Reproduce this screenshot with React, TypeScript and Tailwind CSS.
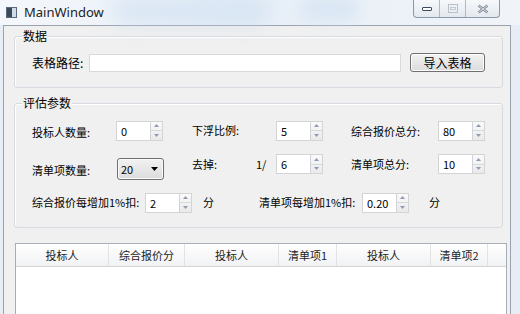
import React from "react";

const cjk = { fontFamily: '"Microsoft YaHei","Noto Sans CJK SC","Noto Sans",sans-serif' };

function Spin({ value, w = 47 }: { value: string; w?: number }) {
  return (
    <div className="flex h-[20px] shrink-0 border border-[#d4d4d4] bg-white" style={{ width: w }}>
      <div className="flex-1 pl-[4px] text-[11px] leading-[18px] text-black">{value}</div>
      <div className="flex w-[12px] flex-col border-l border-[#d0d4da] bg-gradient-to-b from-[#fafafa] to-[#eaeaea]">
        <div className="flex flex-1 items-center justify-center border-b border-[#d6d9de]">
          <svg width="5" height="3" viewBox="0 0 5 3"><path d="M2.5 0L5 3H0z" fill="#8f9bae" /></svg>
        </div>
        <div className="flex flex-1 items-center justify-center">
          <svg width="5" height="3" viewBox="0 0 5 3"><path d="M0 0H5L2.5 3z" fill="#8f9bae" /></svg>
        </div>
      </div>
    </div>
  );
}

function Group({ title, className, children }: { title: string; className: string; children: React.ReactNode }) {
  return (
    <div className={"relative border border-[#d5dbe0] rounded-[3px] shadow-[inset_1px_1px_0_#ffffff] " + className}>
      <span className="absolute left-[7px] top-[-9px] whitespace-nowrap bg-[#f0f0f0] px-[1px] text-[12px] leading-[16px] text-black">{title}</span>
      {children}
    </div>
  );
}

export default function App() {
  const headers = [
    { t: "投标人", w: 93 },
    { t: "综合报价分", w: 76 },
    { t: "投标人", w: 94 },
    { t: "清单项1", w: 58 },
    { t: "投标人", w: 94 },
    { t: "清单项2", w: 57 },
  ];
  return (
    <div className="relative h-[314px] w-[520px] overflow-hidden bg-[#e6edf5] whitespace-nowrap" style={cjk}>
      {/* title bar */}
      <div className="relative flex h-[25px] items-start bg-gradient-to-r from-[#f4f7fb] via-[#e8eff7] to-[#f0f4f9]">
        <div className="pointer-events-none absolute left-[110px] top-[-4px] h-[30px] w-[160px] rounded-full bg-[#c7dbf0] opacity-50 blur-[10px]" />
        <div className="pointer-events-none absolute left-[300px] top-[-4px] h-[26px] w-[60px] rounded-full bg-[#cfe0f2] opacity-60 blur-[8px]" />
        <div className="relative ml-[6px] mt-[7px] flex h-[11px] w-[11px] border border-[#5a6a7a] bg-[#d0dbe6]">
          <div className="h-full w-[5px] bg-[#3a4a5a]" />
        </div>
        <span className="relative ml-[7px] mt-[4px] text-[13px] leading-[16px] text-[#222]" style={{ fontFamily: '"Segoe UI","Noto Sans",sans-serif' }}>
          MainWindow
        </span>
        <div className="relative ml-auto mr-[20px] flex h-[18px] overflow-hidden rounded-b-[4px] border border-t-0 border-[#8c99aa] bg-gradient-to-b from-[#f6f8fa] to-[#e4e9ef]">
          <div className="flex w-[26px] items-center justify-center border-r border-[#b0bac6]">
            <div className="h-[4px] w-[10px] rounded-[1px] border border-[#3b4a5c] bg-white" />
          </div>
          <div className="flex w-[26px] items-center justify-center border-r border-[#b0bac6]">
            <div className="flex h-[9px] w-[10px] items-center justify-center border border-[#b8c0ca]">
              <div className="h-[3px] w-[6px] border border-[#c4cbd3]" />
            </div>
          </div>
          <div className="flex w-[33px] items-center justify-center">
            <svg width="12" height="10" viewBox="0 0 12 10">
              <path d="M1.5 1.5L10.5 8.5M10.5 1.5L1.5 8.5" stroke="#7d8794" strokeWidth="2.4" />
              <path d="M1.5 1.5L10.5 8.5M10.5 1.5L1.5 8.5" stroke="#f2f4f7" strokeWidth="0.8" />
            </svg>
          </div>
        </div>
      </div>

      {/* client area */}
      <div className="ml-[3px] h-[300px] w-[508px] border border-[#9aa3ad] bg-[#f0f0f0] pt-[10px]">
        <Group title="数据" className="ml-[10px] h-[52px] w-[489px]">
          <div className="flex items-center pt-[16px] pl-[17px]">
            <span className="w-[57px] text-[12px] text-black">表格路径:</span>
            <div className="h-[18px] w-[312px] border border-[#d9d9d9] bg-white" />
            <div className="ml-[9px] flex h-[19px] w-[75px] items-center justify-center rounded-[3px] border border-[#707070] bg-gradient-to-b from-[#f2f2f2] to-[#dcdcdc] text-[12px] text-black shadow-[inset_0_0_0_1px_#fcfcfc]">
              导入表格
            </div>
          </div>
        </Group>

        <Group title="评估参数" className="ml-[10px] mt-[15px] h-[125px] w-[489px]">
          <div className="flex flex-col pl-[17px] pt-[16px] text-[11px] text-black">
            <div className="flex h-[21px] items-center">
              <span className="w-[84px] translate-y-[2px]">投标人数量:</span>
              <Spin value="0" />
              <span className="ml-[29px] w-[84px]">下浮比例:</span>
              <Spin value="5" />
              <span className="ml-[28px] w-[87px] translate-y-[1px]">综合报价总分:</span>
              <Spin value="80" />
            </div>
            <div className="mt-[17px] flex h-[22px] items-center">
              <span className="w-[85px] translate-y-[1px]">清单项数量:</span>
              <div className="flex h-[22px] w-[47px] shrink-0 items-center rounded-[3px] border border-[#707070] bg-gradient-to-b from-[#f2f2f2] to-[#dcdcdc] pl-[3px] shadow-[inset_0_0_0_1px_#fbfbfb]">
                <span className="flex-1">20</span>
                <svg width="7" height="4" viewBox="0 0 7 4" className="mr-[5px]"><path d="M0 0H7L3.5 4z" fill="#000" /></svg>
              </div>
              <div className="flex -translate-y-[5px] items-center">
                <span className="ml-[28px] w-[64px]">去掉:</span>
                <span className="w-[20px]">1/</span>
                <Spin value="6" />
                <span className="ml-[28px] w-[87px]">清单项总分:</span>
                <Spin value="10" />
              </div>
            </div>
            <div className="mt-[12px] flex h-[21px] items-center">
              <span className="w-[113px]">综合报价每增加1%扣:</span>
              <Spin value="2" />
              <span className="ml-[11px] w-[56px]">分</span>
              <span className="w-[103px]">清单项每增加1%扣:</span>
              <Spin value="0.20" />
              <span className="ml-[20px]">分</span>
            </div>
          </div>
        </Group>

        <div className="ml-[11px] mt-[15px] h-[80px] w-[492px] border border-[#a8aeb5] bg-white">
          <div className="flex h-[23px] border-b border-[#d5d5d5] bg-gradient-to-b from-[#ffffff] to-[#f1f2f4]">
            {headers.map((h, i) => (
              <div
                key={i}
                className="flex items-center justify-center border-r border-[#e2e3e5] text-[11px] text-[#222]"
                style={{ width: h.w }}
              >
                {h.t}
              </div>
            ))}
          </div>
        </div>
      </div>
    </div>
  );
}
